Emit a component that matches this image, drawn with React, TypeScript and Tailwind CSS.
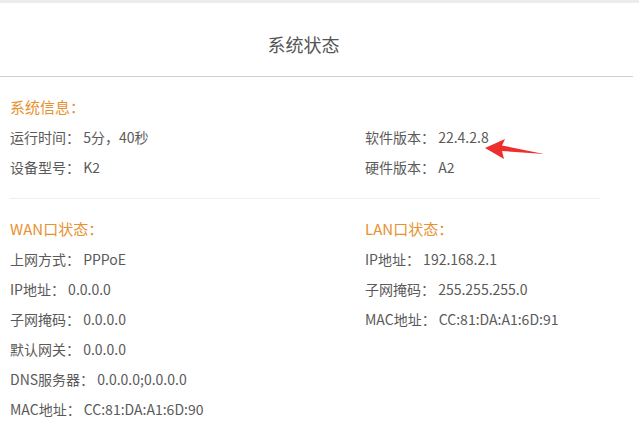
import React from "react"

const systemLeft = [
  ["运行时间：", "5分，40秒"],
  ["设备型号：", "K2"],
]
const systemRight = [
  ["软件版本：", "22.4.2.8"],
  ["硬件版本：", "A2"],
]
const wan = [
  ["上网方式：", "PPPoE"],
  ["IP地址：", "0.0.0.0"],
  ["子网掩码：", "0.0.0.0"],
  ["默认网关：", "0.0.0.0"],
  ["DNS服务器：", "0.0.0.0;0.0.0.0"],
  ["MAC地址：", "CC:81:DA:A1:6D:90"],
]
const lan = [
  ["IP地址：", "192.168.2.1"],
  ["子网掩码：", "255.255.255.0"],
  ["MAC地址：", "CC:81:DA:A1:6D:91"],
]

function Row({ label, value }: { label: string; value: string }) {
  return (
    <div className="h-[30px] leading-[30px] whitespace-nowrap">
      {label} {value}
    </div>
  )
}

function Heading({ children }: { children: React.ReactNode }) {
  return <div className="h-[30px] leading-[30px] text-[15px] text-[#e8912f]">{children}</div>
}

export default function App() {
  return (
    <div
      className="relative w-[639px] h-[429px] bg-white overflow-hidden text-[14px] text-[#5a5a5a]"
      style={{ fontFamily: '"Noto Sans CJK SC", "Noto Sans", sans-serif' }}
    >
      <div className="h-[3px] bg-[#ececec]" />
      <div className="h-[74px] flex items-center justify-center pt-[9px] pr-[26px] text-[18px] text-[#555] border-b border-[#cfcfcf] mr-[6px]">
        系统状态
      </div>

      <div className="pl-[10px] pt-[15px]">
        <Heading>系统信息：</Heading>
        <div className="flex">
          <div className="w-[355px]">
            {systemLeft.map(([l, v]) => (
              <Row key={l} label={l} value={v} />
            ))}
          </div>
          <div>
            {systemRight.map(([l, v]) => (
              <Row key={l} label={l} value={v} />
            ))}
          </div>
        </div>
        <div className="mt-[16px] w-[590px] border-t border-[#efefef]" />
        <div className="flex pt-[15px]">
          <div className="w-[355px]">
            <Heading>WAN口状态：</Heading>
            {wan.map(([l, v]) => (
              <Row key={l} label={l} value={v} />
            ))}
          </div>
          <div>
            <Heading>LAN口状态：</Heading>
            {lan.map(([l, v]) => (
              <Row key={l} label={l} value={v} />
            ))}
          </div>
        </div>
      </div>

      <svg className="absolute left-[482px] top-[139px]" width="64" height="22" viewBox="0 0 64 22">
        <path d="M3 9 L23 0 L20 6.5 L62 15 L20 12 L22 20 Z" fill="#ee2d2d" />
      </svg>
    </div>
  )
}
